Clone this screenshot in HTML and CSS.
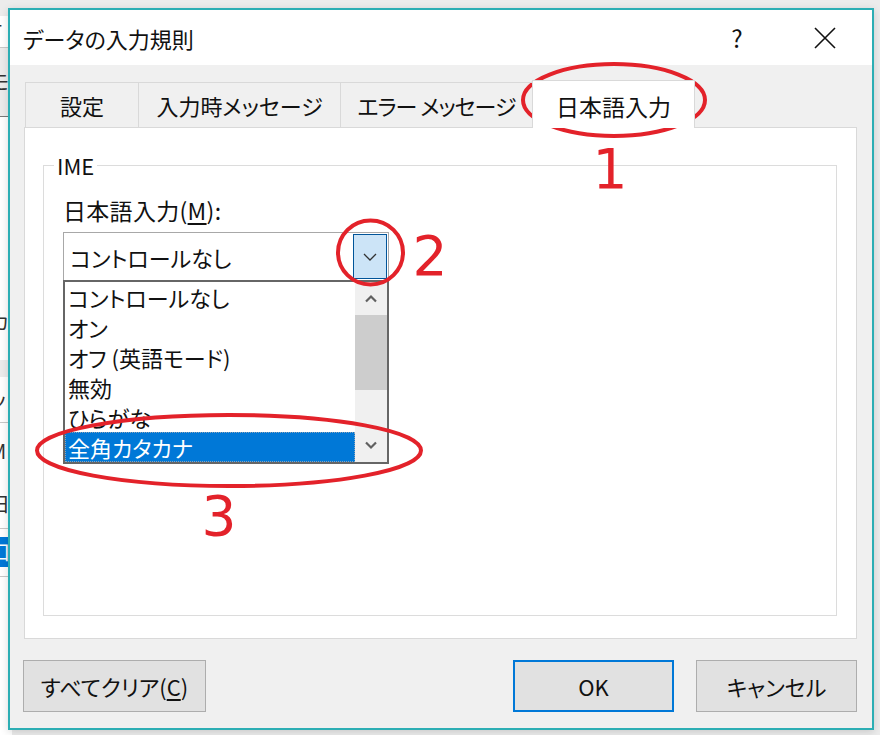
FILE: index.html
```html
<!DOCTYPE html>
<html lang="ja">
<head>
    <meta charset="UTF-8">
    <meta name="viewport" content="width=device-width, initial-scale=1.0">
    <title>データの入力規則</title>
    <link rel="stylesheet" href="styles.css">
</head>
<body>
    <!-- hoja de Excel detrás del diálogo -->
    <div class="sheet">
        <div class="row h16 grey"></div>
        <div class="row h32 line"><span>T</span></div>
        <div class="row h69 grey dark"><span>モ</span></div>
        <div class="row h183"></div>
        <div class="row h45"><span>カ</span></div>
        <div class="row h15"></div>
        <div class="row h17 grey"></div>
        <div class="row h46 line"><span>ッ</span></div>
        <div class="row h57"><span>M</span></div>
        <div class="row h49 line"><span>日</span></div>
        <div class="row h8"></div>
        <div class="row h30 sel"><span>口</span></div>
        <div class="row h10 line"></div>
    </div>

    <div class="dialog">
        <div class="titlebar">
            <span class="title">データの入力規則</span>
            <span class="help">?</span>
            <span class="close">
                <svg width="22" height="22" viewBox="0 0 22 22"><path d="M1 1 L21 21 M21 1 L1 21" stroke="#111" stroke-width="1.6" fill="none"/></svg>
            </span>
        </div>

        <div class="dialog-body">
            <div class="tabs">
                <div class="tab tab-settings">設定</div>
                <div class="tab tab-input">入力時メッセージ</div>
                <div class="tab tab-error">エラー メッセージ</div>
                <div class="tab tab-ime active">日本語入力</div>
            </div>

            <div class="panel">
                <fieldset class="group">
                    <legend>IME</legend>
                    <div class="field-label">日本語入力(<u>M</u>):</div>
                    <div class="combo">
                        <span class="combo-value">コントロールなし</span>
                        <span class="combo-btn">
                            <svg width="14" height="8" viewBox="0 0 14 8"><polyline points="1,1 7,7 13,1" stroke="#333" stroke-width="1.3" fill="none"/></svg>
                        </span>
                        <div class="dropdown">
                            <ul class="options">
                                <li>コントロールなし</li>
                                <li>オン</li>
                                <li>オフ (英語モード)</li>
                                <li>無効</li>
                                <li>ひらがな</li>
                                <li class="selected">全角カタカナ</li>
                            </ul>
                            <div class="scrollbar">
                                <div class="arrow up">
                                    <svg width="14" height="9" viewBox="0 0 14 9"><polyline points="2,7.5 7,2.5 12,7.5" stroke="#606060" stroke-width="2.2" fill="none"/></svg>
                                </div>
                                <div class="thumb"></div>
                                <div class="track"></div>
                                <div class="arrow down">
                                    <svg width="14" height="9" viewBox="0 0 14 9"><polyline points="2,1.5 7,6.5 12,1.5" stroke="#606060" stroke-width="2.2" fill="none"/></svg>
                                </div>
                            </div>
                        </div>
                    </div>
                </fieldset>
            </div>

            <div class="buttons">
                <button class="btn clear">すべてクリア(<u>C</u>)</button>
                <button class="btn ok">OK</button>
                <button class="btn">キャンセル</button>
            </div>
        </div>
    </div>

    <!-- anotaciones rojas -->
    <svg class="marks" width="880" height="735" viewBox="0 0 880 735">
        <g fill="none" stroke="#e3222a" stroke-width="4">
            <ellipse cx="614" cy="100" rx="91" ry="36"/>
            <ellipse cx="370.5" cy="252.5" rx="32.5" ry="32"/>
            <ellipse cx="229" cy="450.5" rx="192" ry="35.5"/>
        </g>
        <g class="mark-num" fill="#e3222a" text-anchor="middle">
            <text x="610" y="188">1</text>
            <text x="430" y="275">2</text>
            <text x="219" y="535">3</text>
        </g>
    </svg>
</body>
</html>
```

FILE: styles.css
```css
body {
    margin: 0;
    width: 880px;
    height: 735px;
    position: relative;
    overflow: hidden;
    background-color: #ececec;
    font-family: 'Noto Sans CJK JP', 'Noto Sans', sans-serif;
    font-feature-settings: "palt";
    color: #111;
}

/* hoja de fondo (sólo se ve el borde izquierdo) */
.sheet {
    position: absolute;
    left: 0;
    top: 0;
    width: 12px;
    height: 735px;
    display: flex;
    flex-direction: column;
    background-color: #fff;
}

.row {
    flex: none;
    display: flex;
    align-items: center;
    border-bottom: 1px solid transparent;
    box-sizing: border-box;
    font-size: 20px;
    line-height: 1;
    color: #333;
    overflow: hidden;
}

.row span {
    margin-left: -10px;
}

.row.grey { background-color: #ececec; }
.row.line { border-bottom-color: #c8c8c8; }
.row.dark { border-bottom-color: #7a7a7a; }
.row.sel { background-color: #0078d7; color: #fff; }

.h8 { height: 8px; }
.h10 { height: 10px; }
.h15 { height: 15px; }
.h16 { height: 16px; }
.h17 { height: 17px; }
.h30 { height: 30px; }
.h32 { height: 32px; }
.h45 { height: 45px; }
.h46 { height: 46px; }
.h49 { height: 49px; }
.h57 { height: 57px; }
.h69 { height: 69px; }
.h183 { height: 183px; }

/* ventana del diálogo */
.dialog {
    position: absolute;
    left: 8px;
    top: 8px;
    width: 866px;
    height: 722px;
    box-sizing: border-box;
    border: 2px solid #2caeb4;
    background-color: #f0f0f0;
    display: flex;
    flex-direction: column;
    box-shadow: 0 2px 8px rgba(0, 0, 0, 0.15);
}

.titlebar {
    height: 55px;
    flex: none;
    background-color: #fff;
    display: flex;
    align-items: center;
    padding: 0 17px 0 13px;
    font-size: 22px;
}

.title {
    flex: 1;
}

.help {
    width: 50px;
    text-align: center;
    font-size: 24px;
}

.close {
    width: 60px;
    margin-left: 33px;
    display: flex;
    justify-content: center;
}

.dialog-body {
    flex: 1;
    display: flex;
    flex-direction: column;
    padding: 17px 15px 0 14px;
}

/* pestañas */
.tabs {
    display: flex;
    align-items: flex-end;
    height: 45px;
    margin-left: 1px;
    position: relative;
    z-index: 1;
}

.tab {
    height: 45px;
    box-sizing: border-box;
    display: flex;
    align-items: center;
    justify-content: center;
    border: 1px solid #d9d9d9;
    border-bottom: none;
    border-left: none;
    font-size: 22px;
    white-space: pre;
}

.tab-settings { width: 114px; border-left: 1px solid #d9d9d9; }
.tab-input { width: 202px; }
.tab-error { width: 192px; letter-spacing: -1px; }
.tab-ime { width: 163px; }

.tab.active {
    height: 48px;
    margin-bottom: -1px;
    margin-left: -1px;
    padding-top: 2px;
    background-color: #fff;
    border-left: 1px solid #d9d9d9;
    font-size: 23px;
}

.panel {
    height: 512px;
    box-sizing: border-box;
    background-color: #fff;
    border: 1px solid #d9d9d9;
    padding: 24px 19px 22px 18px;
    display: flex;
    flex-direction: column;
}

.group {
    flex: 1;
    margin: 0;
    padding: 0 19px;
    border: 1px solid #dcdcdc;
    min-width: 0;
}

.group legend {
    margin-left: -9px;
    padding: 0 3px;
    font-size: 22px;
    line-height: 26px;
}

.field-label {
    margin-top: 18px;
    font-size: 23px;
    line-height: 28px;
    letter-spacing: 0.3px;
}

.field-label u {
    text-underline-offset: 3px;
}

/* cuadro combinado */
.combo {
    position: relative;
    width: 326px;
    height: 49px;
    margin-top: 8px;
    box-sizing: border-box;
    border: 1px solid #a8a8a8;
    display: flex;
    align-items: center;
    padding-left: 6px;
    font-size: 22px;
}

.combo-value {
    flex: 1;
}

.combo-btn {
    width: 34px;
    height: 45px;
    margin-right: 1px;
    box-sizing: border-box;
    background-color: #cce4f7;
    border: 1px solid #005499;
    display: flex;
    align-items: center;
    justify-content: center;
}

.dropdown {
    position: absolute;
    left: -1px;
    right: -1px;
    top: 100%;
    border: 2px solid #666;
    background-color: #fff;
    display: flex;
}

.options {
    flex: 1;
    margin: 0;
    padding: 0;
    list-style: none;
}

.options li {
    height: 30px;
    line-height: 30px;
    padding-left: 3px;
    font-size: 22px;
    white-space: nowrap;
    overflow: hidden;
}

.options li.selected {
    background-color: #0078d7;
    color: #fff;
    outline: 1px dotted #8fa4b8;
    outline-offset: -1px;
}

.scrollbar {
    width: 32px;
    background-color: #f0f0f0;
    display: flex;
    flex-direction: column;
}

.arrow {
    display: flex;
    align-items: center;
    justify-content: center;
}

.arrow.up { height: 33px; }
.arrow.down { height: 34px; }

.thumb {
    height: 75px;
    background-color: #cdcdcd;
}

.track {
    flex: 1;
}

/* botones */
.buttons {
    display: flex;
    margin-top: 21px;
    height: 52px;
}

.btn {
    height: 52px;
    width: 161px;
    box-sizing: border-box;
    background-color: #e1e1e1;
    border: 1px solid #adadad;
    font-family: inherit;
    font-feature-settings: "palt";
    font-size: 22px;
    color: #111;
    padding: 0;
}

.btn.clear {
    width: 183px;
    margin-left: -1px;
}

.btn u {
    text-underline-offset: 3px;
}

.btn.ok {
    margin-left: auto;
    margin-right: 22px;
    border: 2px solid #0078d7;
}

/* anotaciones */
.marks {
    position: absolute;
    left: 0;
    top: 0;
    pointer-events: none;
}

.mark-num {
    font-family: 'DejaVu Sans', sans-serif;
    font-size: 55px;
}
```
